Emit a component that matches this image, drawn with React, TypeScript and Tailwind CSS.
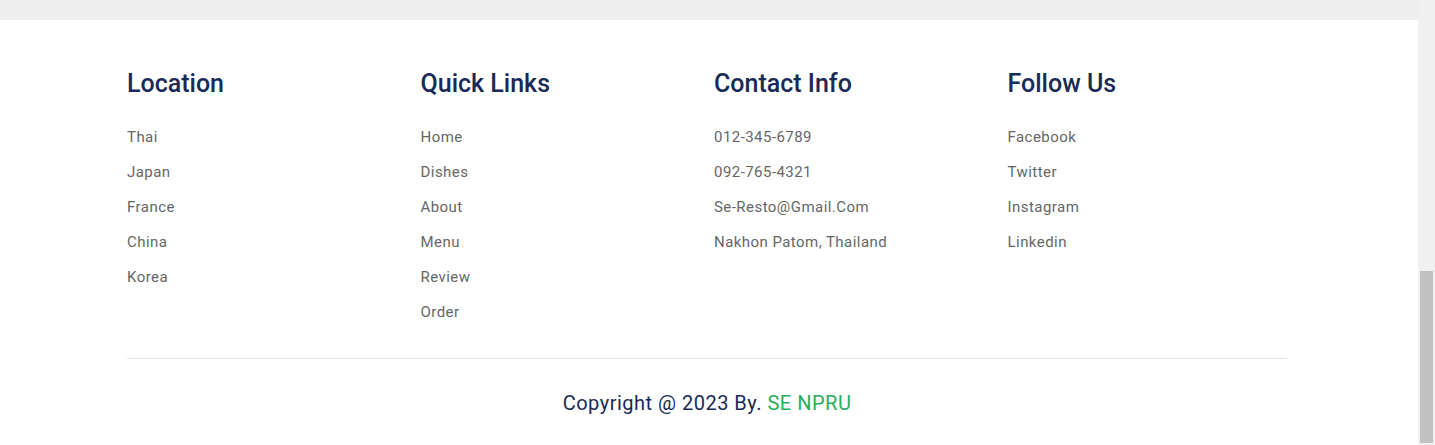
const COLUMNS: { title: string; items: string[] }[] = [
  { title: 'Location', items: ['Thai', 'Japan', 'France', 'China', 'Korea'] },
  { title: 'Quick Links', items: ['Home', 'Dishes', 'About', 'Menu', 'Review', 'Order'] },
  {
    title: 'Contact Info',
    items: ['012-345-6789', '092-765-4321', 'Se-Resto@Gmail.Com', 'Nakhon Patom, Thailand'],
  },
  { title: 'Follow Us', items: ['Facebook', 'Twitter', 'Instagram', 'Linkedin'] },
];

export default function App() {
  return (
    <div className="flex h-[445px] w-[1435px] overflow-hidden bg-white font-['Roboto',sans-serif]">
      <div className="flex-1 flex flex-col">
        <div className="h-[20px] bg-[#eeeeee]" />

        {/* Footer */}
        <footer className="flex-1 pl-[127px]">
          <div className="w-[1160px] grid grid-cols-4 gap-[14px] pt-[49px]">
            {COLUMNS.map((col) => (
              <div key={col.title}>
                <h3 className="text-[25px] leading-[30px] font-medium text-[#192a56] mb-[21px]">
                  {col.title}
                </h3>
                <ul>
                  {col.items.map((item) => (
                    <li
                      key={item}
                      className="text-[15px] leading-[35px] tracking-[0.45px] text-[#666666]"
                    >
                      {item}
                    </li>
                  ))}
                </ul>
              </div>
            ))}
          </div>
          <div className="w-[1160px] mt-[28px] border-t border-[#e5e5e5]" />
          <p className="w-[1160px] mt-[32px] text-center text-[20px] leading-[24px] tracking-[0.5px] text-[#192a56]">
            Copyright @ 2023 By. <span className="text-[#27ae60]">SE NPRU</span>
          </p>
        </footer>
      </div>

      {/* Scrollbar */}
      <div className="w-[17px] bg-[#f0f0f0] flex flex-col justify-end pb-[2px] px-[2px]">
        <div className="h-[172px] bg-[#c1c1c1]" />
      </div>
    </div>
  );
}
